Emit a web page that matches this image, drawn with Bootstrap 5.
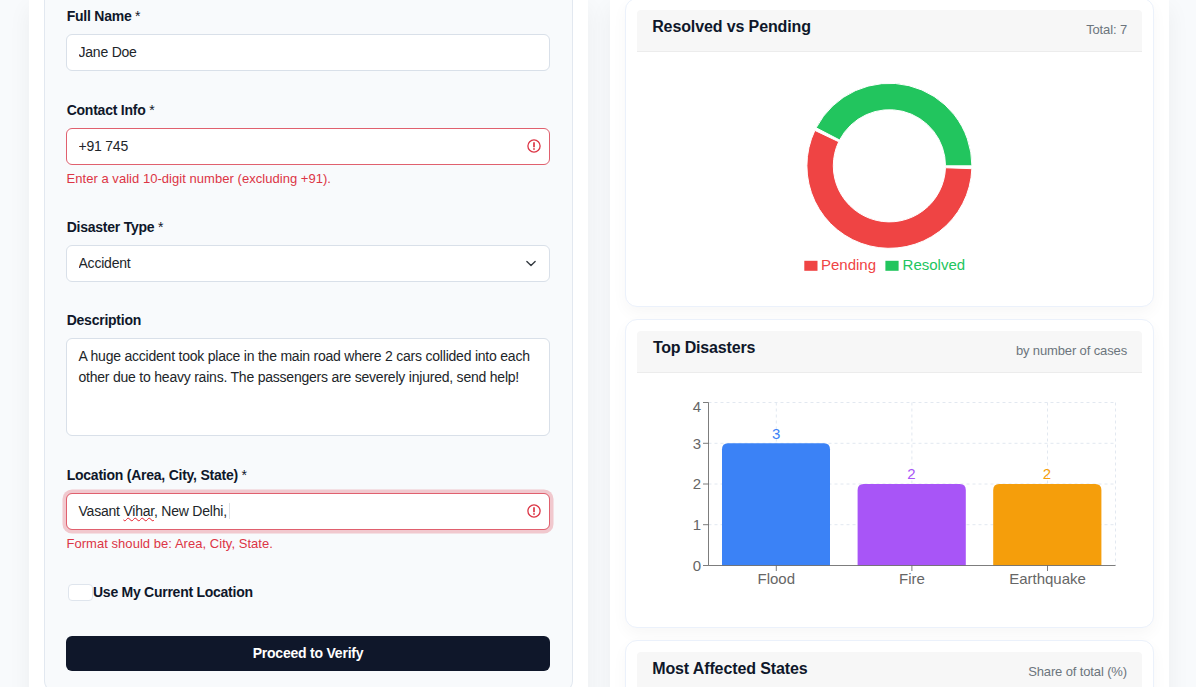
<!DOCTYPE html>
<html lang="en">
<head>
<meta charset="utf-8">
<meta name="viewport" content="width=device-width, initial-scale=1">
<title>Disaster report</title>
<link href="https://cdn.jsdelivr.net/npm/bootstrap@5.3.0/dist/css/bootstrap.min.css" rel="stylesheet">
<style>
  body { font-family: "Liberation Sans", Arial, sans-serif; font-size: 14px; line-height: 21px; letter-spacing: -.22px; background: #f8fafc; color: #0f172a; }
  .board { height: 687px; overflow: hidden; padding: 0 27px 0 29px; gap: 22px; }
  .panel { flex: 1 1 0; min-width: 0; height: 720px; background: #fff; box-shadow: 0 8px 22px rgba(0,0,0,.055); padding: 0 15px; }
  .report { background: #f8fafc; border: 1px solid #e2e8f0; border-top: 0; border-radius: 0 0 11px 11px; height: 692px; padding: 6px 22px 0 21px; }
  .report .form-label { display: block; font-weight: 700; margin-bottom: 7px; padding-left: .7px; letter-spacing: -.24px; }
  .report .form-label span { font-weight: 400; }
  .report .form-control, .report .form-select { font-size: 14px; line-height: 21px; letter-spacing: -.22px; height: 37px; padding: 6px 11.5px 8px; border-color: #d9e0e9; border-radius: 6px; color: #212529; }
  .report .form-select { background-size: 14px 11px; background-position: right 11.5px center; padding: 7px 11.5px; }
  .report .form-control.is-invalid { border-color: #e0606e; background-image: url("data:image/svg+xml,%3csvg xmlns='http://www.w3.org/2000/svg' viewBox='0 0 14 14' fill='none' stroke='%23dc3545'%3e%3ccircle cx='7' cy='7' r='6.1' stroke-width='1.3'/%3e%3cpath d='M7 3.3v4.9M7 9.2v1.5' stroke-width='1.7'/%3e%3c/svg%3e"); background-size: 14px 14px; background-position: right 8px top 10px; }
  .report .form-control.focused { box-shadow: 0 0 0 3.5px rgba(220,53,69,.25); padding-top: 7px; }
  .report textarea.form-control { height: 98px; padding-top: 7px; resize: none; }
  .report .invalid-feedback { display: block; font-size: 13px; line-height: 19px; letter-spacing: .04px; margin-top: 4px; color: #dc3545; padding-left: .5px; }
  .field { margin-bottom: 29px; }
  .misspelt { text-decoration: underline wavy #e5202c 1px; text-underline-offset: 1px; }
  .caret { display: inline-block; width: 1px; height: 16px; background: #dde1e6; vertical-align: -3px; margin-left: 2px; }
  .tick { width: 25px; height: 17px; background: #fff; border: 1px solid #dfe5ed; border-radius: 4px; margin-left: 2px; }
  .use-location { letter-spacing: -.26px; margin-bottom: 33px; }
  .btn-verify { height: 35px; background: #0f172a; color: #fff; font-size: 14px; font-weight: 700; line-height: 21px; letter-spacing: -.22px; border-radius: 6px; border: 0; padding: 0; }
  .stat { border: 1px solid #ebf1fb; border-radius: 12px; padding: 11px 11px 0 10.5px; box-shadow: 0 6px 16px rgba(15,23,42,.035); margin-bottom: 12px; letter-spacing: 0; }
  .stat .card-header { height: 42px; background: #f7f7f7; border-bottom: 1px solid #ececec; border-radius: 4px 4px 0 0; padding: 7px 15px 0 15.7px; }
  .stat h2 { font-size: 16px; font-weight: 700; line-height: 20px; letter-spacing: -.12px; margin: 0; }
  .stat .hint { font-size: 13px; letter-spacing: -.13px; color: #6c757d; line-height: 20px; padding-top: 3px; }
  .stat svg { display: block; font-size: 15px; }
</style>
</head>
<body>
<main class="board d-flex">
  <section class="panel">
    <form class="report" onsubmit="return false">
      <div class="field">
        <label class="form-label">Full Name <span>*</span></label>
        <input class="form-control" value="Jane Doe">
      </div>
      <div class="field">
        <label class="form-label">Contact Info <span>*</span></label>
        <input class="form-control is-invalid" value="+91 745">
        <div class="invalid-feedback">Enter a valid 10-digit number (excluding +91).</div>
      </div>
      <div class="field" style="margin-bottom:28px">
        <label class="form-label">Disaster Type <span>*</span></label>
        <select class="form-select"><option>Accident</option></select>
      </div>
      <div class="field">
        <label class="form-label">Description</label>
        <textarea class="form-control" spellcheck="false">A huge accident took place in the main road where 2 cars collided into each other due to heavy rains. The passengers are severely injured, send help!</textarea>
      </div>
      <div class="field">
        <label class="form-label">Location (Area, City, State) <span>*</span></label>
        <div class="form-control is-invalid focused">Vasant <span class="misspelt">Vihar</span>, New Delhi,<span class="caret"></span></div>
        <div class="invalid-feedback">Format should be: Area, City, State.</div>
      </div>
      <div class="d-flex align-items-center fw-bold use-location"><span class="tick"></span>Use My Current Location</div>
      <button class="btn btn-verify w-100">Proceed to Verify</button>
    </form>
  </section>

  <section class="panel">
    <article class="card stat" style="margin-top:-2px;height:309px">
      <div class="card-header d-flex justify-content-between"><h2>Resolved vs Pending</h2><span class="hint">Total: 7</span></div>
      <svg width="505" height="240" viewBox="637 52 505 240">
        <g stroke="#fff">
          <path fill="#22c55e" d="M971.9 165.8A82.5 82.5 0 0 0 816.16 127.83L839.6 139.98A56.1 56.1 0 0 1 945.5 165.8Z"/>
          <path fill="#ef4444" d="M814.88 130.42A82.5 82.5 0 1 0 971.85 168.68L945.47 167.76A56.1 56.1 0 1 1 838.72 141.74Z"/>
        </g>
        <rect x="804.3" y="260.8" width="13.2" height="10" fill="#ef4444"/>
        <text x="821" y="270" fill="#ef4444">Pending</text>
        <rect x="885.4" y="260.8" width="13.2" height="10" fill="#22c55e"/>
        <text x="902.6" y="270" fill="#22c55e">Resolved</text>
      </svg>
    </article>

    <article class="card stat" style="height:309px">
      <div class="card-header d-flex justify-content-between"><h2 style="padding-left:.7px;letter-spacing:-.18px">Top Disasters</h2><span class="hint">by number of cases</span></div>
      <svg width="505" height="240" viewBox="637 373 505 240">
        <g stroke="#e2e8f0" stroke-dasharray="3 3" fill="none">
          <path d="M708.5 402.5H1115.5M708.5 443.3H1115.5M708.5 484H1115.5M708.5 524.7H1115.5"/>
          <path d="M776.3 402.5V565.5M911.9 402.5V565.5M1047.5 402.5V565.5M1115.5 402.5V565.5"/>
        </g>
        <path fill="#3b82f6" d="M722 565.5V449.3q0-6 6-6H824q6 0 6 6V565.5Z"/>
        <path fill="#a855f7" d="M857.6 565.5V490q0-6 6-6H959.8q6 0 6 6V565.5Z"/>
        <path fill="#f59e0b" d="M993.2 565.5V490q0-6 6-6H1095.4q6 0 6 6V565.5Z"/>
        <path d="M703 402.5H708.5V565.5H1115.5M703 443.3H708.5M703 484H708.5M703 524.7H708.5M703 565.5H708.5M776.3 565.5V571M911.9 565.5V571M1047.5 565.5V571" fill="none" stroke="#666" stroke-opacity=".85"/>
        <g fill="#666" text-anchor="end">
          <text x="701" y="412">4</text><text x="701" y="449">3</text><text x="701" y="489">2</text><text x="701" y="530">1</text><text x="701" y="571">0</text>
        </g>
        <g text-anchor="middle">
          <text x="776.2" y="439" fill="#3b82f6">3</text>
          <text x="911.5" y="479" fill="#a855f7">2</text>
          <text x="1047" y="479" fill="#f59e0b">2</text>
          <g fill="#666"><text x="776.3" y="584">Flood</text><text x="911.9" y="584">Fire</text><text x="1047.5" y="584">Earthquake</text></g>
        </g>
      </svg>
    </article>

    <article class="card stat" style="height:309px">
      <div class="card-header d-flex justify-content-between"><h2>Most Affected States</h2><span class="hint">Share of total (%)</span></div>
    </article>
  </section>
</main>
<script src="https://cdn.jsdelivr.net/npm/bootstrap@5.3.0/dist/js/bootstrap.bundle.min.js"></script>
</body>
</html>
